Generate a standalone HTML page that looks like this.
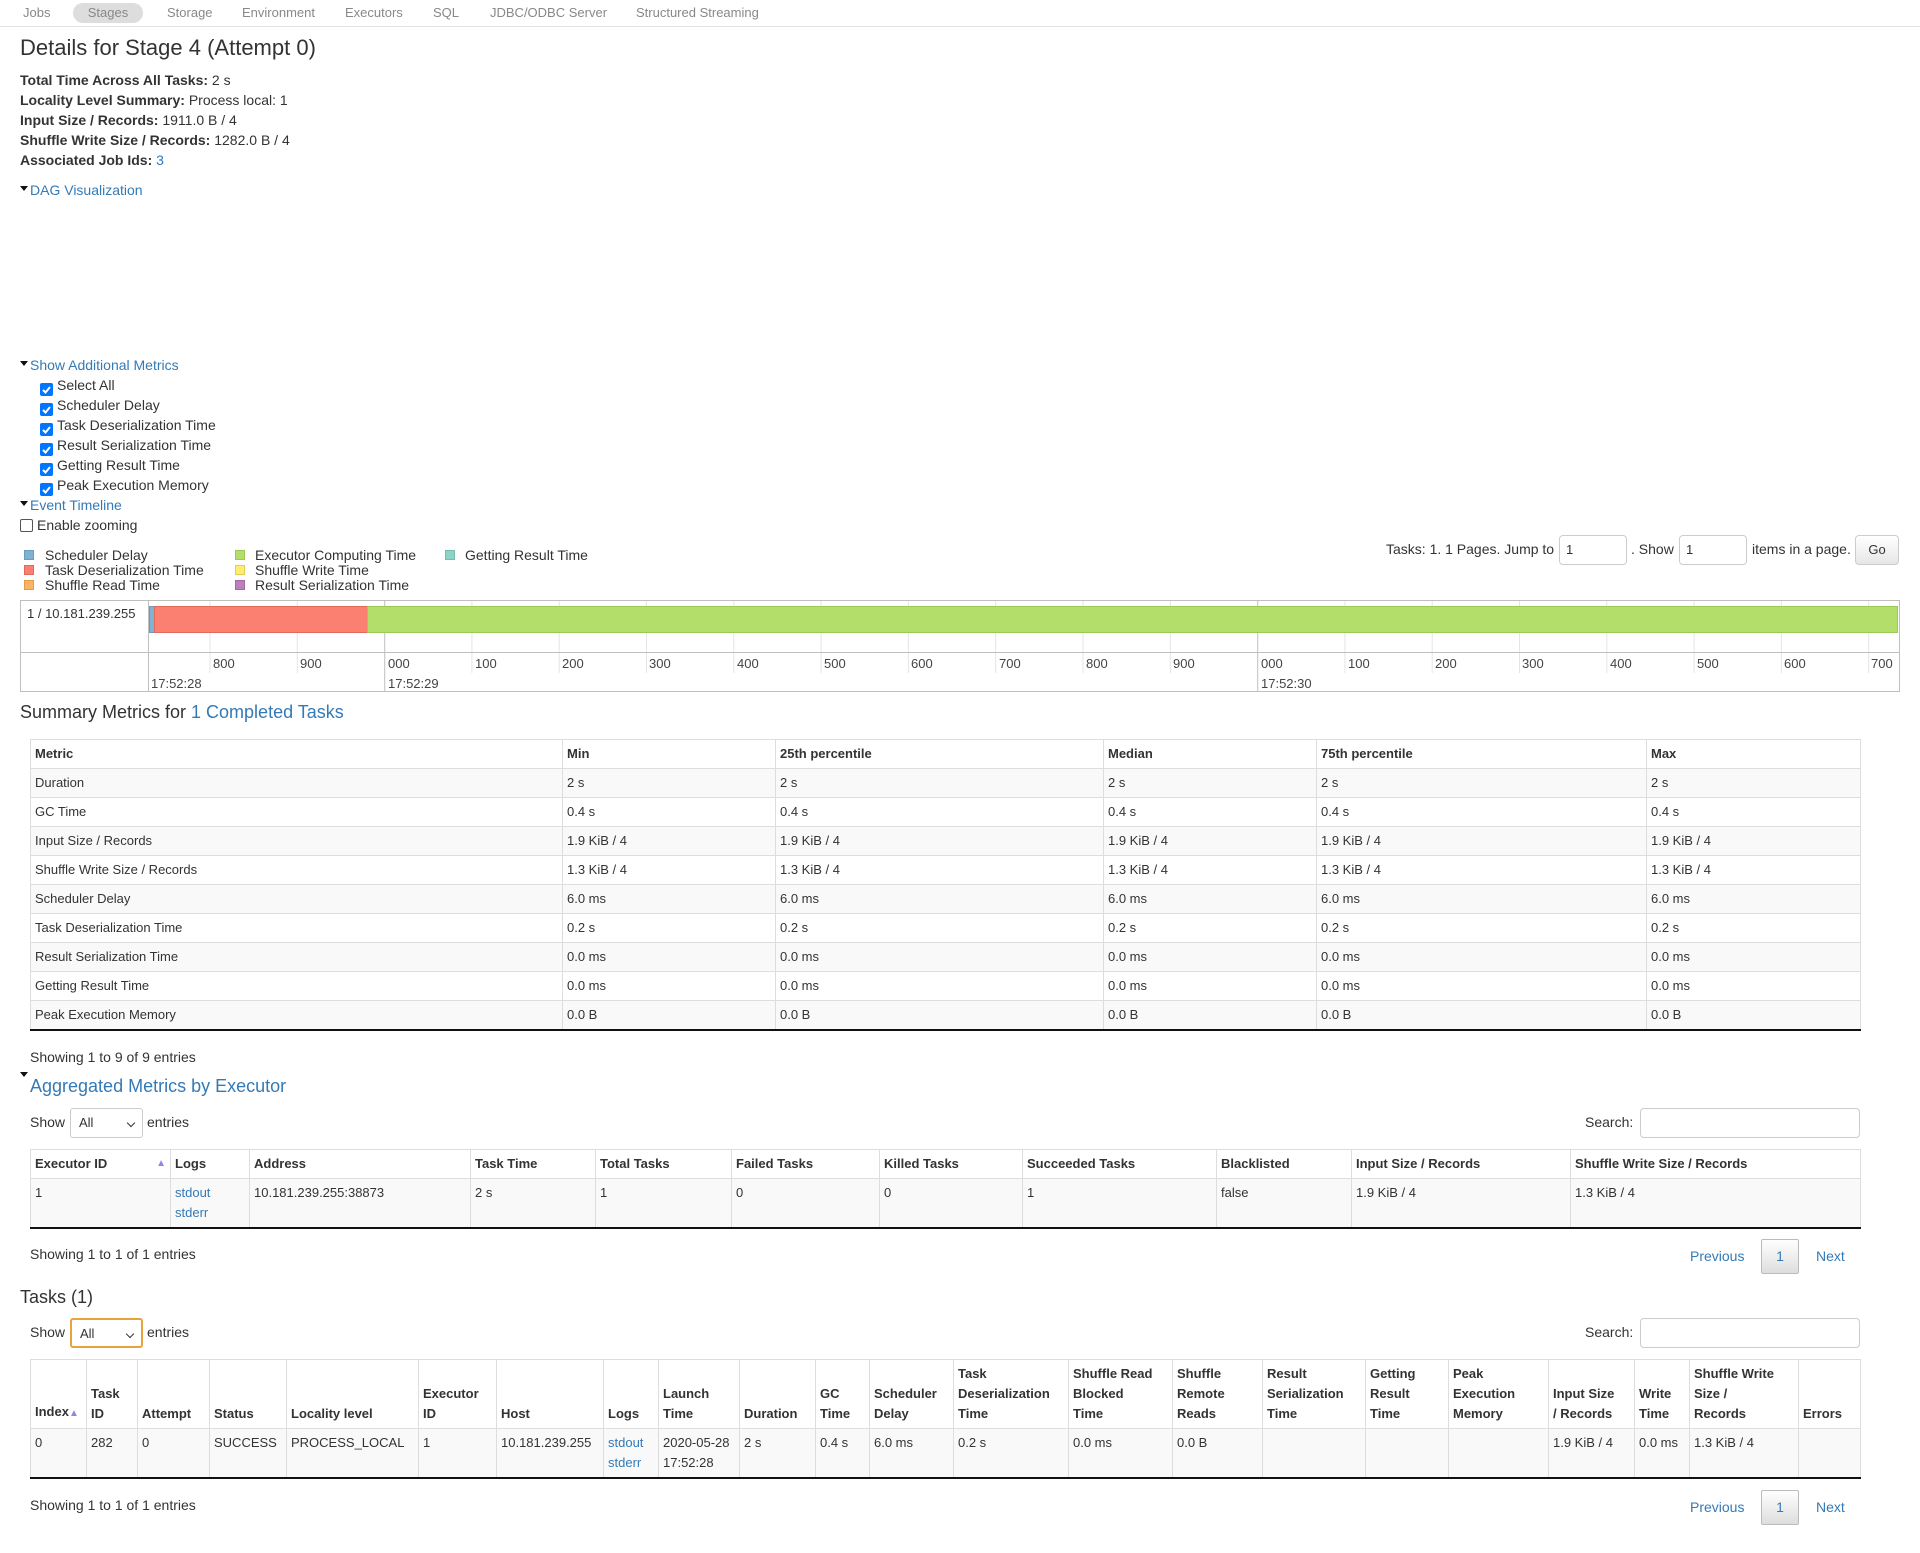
<!DOCTYPE html>
<html><head><meta charset="utf-8"><style>
*{box-sizing:border-box;margin:0;padding:0}
body{width:1920px;height:1553px;background:#fff;font-family:"Liberation Sans",Arial,sans-serif;font-size:14px;color:#333;position:relative;overflow:hidden}
.a{position:absolute;white-space:nowrap;line-height:20px}
a,.l{color:#337ab7;text-decoration:none}
.nav{position:absolute;left:0;top:0;width:1920px;height:27px;border-bottom:1px solid #e3e3e3}
.nav span{position:absolute;top:3px;height:20px;line-height:20px;font-size:13px;color:#888}
.pill{background:#ddd;border-radius:10px;text-align:center}
.cb{position:absolute;width:13px;height:13px;background:#0075ff;border-radius:2px}
.cb svg{position:absolute;left:1px;top:1px}
.tri{position:absolute;width:0;height:0;border-left:4px solid transparent;border-right:4px solid transparent;border-top:5px solid #111}
.sw{position:absolute;width:10px;height:10px}
.inp{position:absolute;border:1px solid #ccc;border-radius:4px;background:#fff;font-size:13px;padding-left:6px;line-height:27px}
table{position:absolute;border-collapse:collapse;table-layout:fixed;font-size:13px;border-top:1px solid #ddd;border-left:1px solid #ddd;border-right:1px solid #ddd;border-bottom:2px solid #111}
td,th{border:1px solid #ddd;padding:4px 4px;line-height:20px;text-align:left;vertical-align:top;overflow:hidden;white-space:nowrap}
th{font-weight:bold;vertical-align:bottom;border-bottom:1px solid #ddd}
tr.o td{background:#f9f9f9}
.pg{position:absolute;height:36px;line-height:34px;font-size:14px}
.pgb{position:absolute;border:1px solid #bbb;border-radius:2px;background:linear-gradient(#fff,#ddd);text-align:center;color:#337ab7;line-height:33px}
.sel{position:absolute;border:1px solid #ccc;border-radius:3px;font-size:13px;padding-left:8px;line-height:27px}
.sel:after{content:"";position:absolute;right:8px;top:11px;width:5px;height:5px;border-right:1.5px solid #333;border-bottom:1.5px solid #333;transform:rotate(45deg)}
</style></head><body>
<div class="nav">
<span style="left:23px">Jobs</span>
<span class="pill" style="left:73px;width:70px">Stages</span>
<span style="left:167px">Storage</span>
<span style="left:242px">Environment</span>
<span style="left:345px">Executors</span>
<span style="left:433px">SQL</span>
<span style="left:490px">JDBC/ODBC Server</span>
<span style="left:636px">Structured Streaming</span>
</div>
<div class="a" style="left:20px;top:33px;font-size:22px;line-height:30px">Details for Stage 4 (Attempt 0)</div>
<div class="a" style="left:20px;top:70px"><b>Total Time Across All Tasks:</b> 2 s</div>
<div class="a" style="left:20px;top:90px"><b>Locality Level Summary:</b> Process local: 1</div>
<div class="a" style="left:20px;top:110px"><b>Input Size / Records:</b> 1911.0 B / 4</div>
<div class="a" style="left:20px;top:130px"><b>Shuffle Write Size / Records:</b> 1282.0 B / 4</div>
<div class="a" style="left:20px;top:150px"><b>Associated Job Ids:</b> <span class="l">3</span></div>
<div class="tri" style="left:20px;top:186px"></div>
<div class="a l" style="left:30px;top:180px">DAG Visualization</div>
<div class="tri" style="left:20px;top:361px"></div>
<div class="a l" style="left:30px;top:355px">Show Additional Metrics</div>
<div class="cb" style="left:40px;top:383px"><svg width="11" height="11"><path d="M2 6 L4.5 8.5 L9 3" stroke="#fff" stroke-width="2" fill="none"/></svg></div>
<div class="a" style="left:57px;top:375px">Select All</div>
<div class="cb" style="left:40px;top:403px"><svg width="11" height="11"><path d="M2 6 L4.5 8.5 L9 3" stroke="#fff" stroke-width="2" fill="none"/></svg></div>
<div class="a" style="left:57px;top:395px">Scheduler Delay</div>
<div class="cb" style="left:40px;top:423px"><svg width="11" height="11"><path d="M2 6 L4.5 8.5 L9 3" stroke="#fff" stroke-width="2" fill="none"/></svg></div>
<div class="a" style="left:57px;top:415px">Task Deserialization Time</div>
<div class="cb" style="left:40px;top:443px"><svg width="11" height="11"><path d="M2 6 L4.5 8.5 L9 3" stroke="#fff" stroke-width="2" fill="none"/></svg></div>
<div class="a" style="left:57px;top:435px">Result Serialization Time</div>
<div class="cb" style="left:40px;top:463px"><svg width="11" height="11"><path d="M2 6 L4.5 8.5 L9 3" stroke="#fff" stroke-width="2" fill="none"/></svg></div>
<div class="a" style="left:57px;top:455px">Getting Result Time</div>
<div class="cb" style="left:40px;top:483px"><svg width="11" height="11"><path d="M2 6 L4.5 8.5 L9 3" stroke="#fff" stroke-width="2" fill="none"/></svg></div>
<div class="a" style="left:57px;top:475px">Peak Execution Memory</div>
<div class="tri" style="left:20px;top:501px"></div>
<div class="a l" style="left:30px;top:495px">Event Timeline</div>
<div style="position:absolute;left:20px;top:519px;width:13px;height:13px;border:1px solid #555;border-radius:2px"></div>
<div class="a" style="left:37px;top:515px">Enable zooming</div>

<div class="sw" style="left:24px;top:550px;background:#80b1d3;border:1px solid #6a9cc0"></div><div class="a" style="left:45px;top:545px">Scheduler Delay</div>
<div class="sw" style="left:24px;top:565px;background:#fb8072;border:1px solid #e06a5c"></div><div class="a" style="left:45px;top:560px">Task Deserialization Time</div>
<div class="sw" style="left:24px;top:580px;background:#fdb462;border:1px solid #e09b4c"></div><div class="a" style="left:45px;top:575px">Shuffle Read Time</div>
<div class="sw" style="left:235px;top:550px;background:#b3de69;border:1px solid #9bc955"></div><div class="a" style="left:255px;top:545px">Executor Computing Time</div>
<div class="sw" style="left:235px;top:565px;background:#ffed6f;border:1px solid #e0cf55"></div><div class="a" style="left:255px;top:560px">Shuffle Write Time</div>
<div class="sw" style="left:235px;top:580px;background:#bc80bd;border:1px solid #a46aa5"></div><div class="a" style="left:255px;top:575px">Result Serialization Time</div>
<div class="sw" style="left:445px;top:550px;background:#8dd3c7;border:1px solid #75bcaf"></div><div class="a" style="left:465px;top:545px">Getting Result Time</div>

<div class="a" style="left:1386px;top:539px">Tasks: 1. 1 Pages. Jump to</div>
<div class="inp" style="left:1559px;top:535px;width:68px;height:30px">1</div>
<div class="a" style="left:1631px;top:539px">. Show</div>
<div class="inp" style="left:1679px;top:535px;width:68px;height:30px">1</div>
<div class="a" style="left:1752px;top:539px">items in a page.</div>
<div class="inp" style="left:1855px;top:535px;width:44px;height:30px;background:linear-gradient(#fff,#e6e6e6);text-align:center;padding:0">Go</div>

<svg style="position:absolute;left:0;top:0" width="1920" height="700">
<rect x="20.5" y="600.5" width="1879" height="91" fill="#fff" stroke="#bfbfbf"/>
<g stroke="#e5e5e5">
<line x1="210" y1="601" x2="210" y2="673"/><line x1="297.3" y1="601" x2="297.3" y2="673"/>
<line x1="471.9" y1="601" x2="471.9" y2="673"/><line x1="559.2" y1="601" x2="559.2" y2="673"/>
<line x1="646.5" y1="601" x2="646.5" y2="673"/><line x1="733.8" y1="601" x2="733.8" y2="673"/>
<line x1="821.1" y1="601" x2="821.1" y2="673"/><line x1="908.4" y1="601" x2="908.4" y2="673"/>
<line x1="995.7" y1="601" x2="995.7" y2="673"/><line x1="1083" y1="601" x2="1083" y2="673"/>
<line x1="1170.3" y1="601" x2="1170.3" y2="673"/>
<line x1="1344.9" y1="601" x2="1344.9" y2="673"/><line x1="1432.2" y1="601" x2="1432.2" y2="673"/>
<line x1="1519.5" y1="601" x2="1519.5" y2="673"/><line x1="1606.8" y1="601" x2="1606.8" y2="673"/>
<line x1="1694.1" y1="601" x2="1694.1" y2="673"/><line x1="1781.4" y1="601" x2="1781.4" y2="673"/>
<line x1="1868.7" y1="601" x2="1868.7" y2="673"/>
</g>
<g stroke="#bfbfbf"><line x1="148.5" y1="601" x2="148.5" y2="691"/><line x1="21" y1="652.5" x2="1899" y2="652.5"/>
<line x1="384.7" y1="601" x2="384.7" y2="691"/><line x1="1257.7" y1="601" x2="1257.7" y2="691"/></g>
<rect x="149.5" y="606.5" width="5" height="26" fill="#80b1d3" stroke="#6a9cc0"/>
<rect x="154.5" y="606.5" width="213" height="26" fill="#fb8072" stroke="#e06a5c"/>
<rect x="367.5" y="606.5" width="1530" height="26" fill="#b3de69" stroke="#9bc955"/>
<g font-family="Liberation Sans,Arial,sans-serif" font-size="13" fill="#444">
<text x="27" y="618" fill="#333">1 / 10.181.239.255</text>
<text x="213" y="668">800</text><text x="300" y="668">900</text><text x="388" y="668">000</text>
<text x="475" y="668">100</text><text x="562" y="668">200</text><text x="649" y="668">300</text>
<text x="737" y="668">400</text><text x="824" y="668">500</text><text x="911" y="668">600</text>
<text x="999" y="668">700</text><text x="1086" y="668">800</text><text x="1173" y="668">900</text>
<text x="1261" y="668">000</text><text x="1348" y="668">100</text><text x="1435" y="668">200</text>
<text x="1522" y="668">300</text><text x="1610" y="668">400</text><text x="1697" y="668">500</text>
<text x="1784" y="668">600</text><text x="1871" y="668">700</text>
<text x="151" y="688">17:52:28</text><text x="388" y="688">17:52:29</text><text x="1261" y="688">17:52:30</text>
</g></svg>

<div class="a" style="left:20px;top:700px;font-size:18px;line-height:24px">Summary Metrics for <span class="l">1 Completed Tasks</span></div>

<table style="left:30px;top:739px;width:1830px">
<colgroup><col style="width:532px"><col style="width:213px"><col style="width:328px"><col style="width:213px"><col style="width:330px"><col style="width:214px"></colgroup>
<tr><th>Metric</th><th>Min</th><th>25th percentile</th><th>Median</th><th>75th percentile</th><th>Max</th></tr>
<tr class="o"><td>Duration</td><td>2 s</td><td>2 s</td><td>2 s</td><td>2 s</td><td>2 s</td></tr>
<tr><td>GC Time</td><td>0.4 s</td><td>0.4 s</td><td>0.4 s</td><td>0.4 s</td><td>0.4 s</td></tr>
<tr class="o"><td>Input Size / Records</td><td>1.9 KiB / 4</td><td>1.9 KiB / 4</td><td>1.9 KiB / 4</td><td>1.9 KiB / 4</td><td>1.9 KiB / 4</td></tr>
<tr><td>Shuffle Write Size / Records</td><td>1.3 KiB / 4</td><td>1.3 KiB / 4</td><td>1.3 KiB / 4</td><td>1.3 KiB / 4</td><td>1.3 KiB / 4</td></tr>
<tr class="o"><td>Scheduler Delay</td><td>6.0 ms</td><td>6.0 ms</td><td>6.0 ms</td><td>6.0 ms</td><td>6.0 ms</td></tr>
<tr><td>Task Deserialization Time</td><td>0.2 s</td><td>0.2 s</td><td>0.2 s</td><td>0.2 s</td><td>0.2 s</td></tr>
<tr class="o"><td>Result Serialization Time</td><td>0.0 ms</td><td>0.0 ms</td><td>0.0 ms</td><td>0.0 ms</td><td>0.0 ms</td></tr>
<tr><td>Getting Result Time</td><td>0.0 ms</td><td>0.0 ms</td><td>0.0 ms</td><td>0.0 ms</td><td>0.0 ms</td></tr>
<tr class="o"><td>Peak Execution Memory</td><td>0.0 B</td><td>0.0 B</td><td>0.0 B</td><td>0.0 B</td><td>0.0 B</td></tr>
</table>
<div class="a" style="left:30px;top:1047px">Showing 1 to 9 of 9 entries</div>
<div class="tri" style="left:20px;top:1072px"></div>
<div class="a l" style="left:30px;top:1074px;font-size:18px;line-height:24px">Aggregated Metrics by Executor</div>
<div class="a" style="left:30px;top:1112px">Show</div>
<div class="sel" style="left:70px;top:1108px;width:73px;height:30px">All</div>
<div class="a" style="left:147px;top:1112px">entries</div>
<div class="a" style="left:1585px;top:1112px">Search:</div>
<div class="inp" style="left:1640px;top:1108px;width:220px;height:30px"></div>

<table style="left:30px;top:1149px;width:1830px">
<colgroup><col style="width:140px"><col style="width:79px"><col style="width:221px"><col style="width:125px"><col style="width:136px"><col style="width:148px"><col style="width:143px"><col style="width:194px"><col style="width:135px"><col style="width:219px"><col style="width:290px"></colgroup>
<tr><th>Executor ID <span style="float:right;color:#8a8ae0;font-size:10px">&#9650;</span></th><th>Logs</th><th>Address</th><th>Task Time</th><th>Total Tasks</th><th>Failed Tasks</th><th>Killed Tasks</th><th>Succeeded Tasks</th><th>Blacklisted</th><th>Input Size / Records</th><th>Shuffle Write Size / Records</th></tr>
<tr class="o"><td>1</td><td><span class="l">stdout</span><br><span class="l">stderr</span></td><td>10.181.239.255:38873</td><td>2 s</td><td>1</td><td>0</td><td>0</td><td>1</td><td>false</td><td>1.9 KiB / 4</td><td>1.3 KiB / 4</td></tr>
</table>
<div class="a" style="left:30px;top:1244px">Showing 1 to 1 of 1 entries</div>
<div class="pg l" style="left:1690px;top:1239px">Previous</div>
<div class="pgb" style="left:1761px;top:1239px;width:38px;height:35px">1</div>
<div class="pg l" style="left:1816px;top:1239px">Next</div>

<div class="a" style="left:20px;top:1285px;font-size:18px;line-height:24px">Tasks (1)</div>
<div class="a" style="left:30px;top:1322px">Show</div>
<div class="sel" style="left:70px;top:1318px;width:73px;height:30px;border:2px solid #e8a33d">All</div>
<div class="a" style="left:147px;top:1322px">entries</div>
<div class="a" style="left:1585px;top:1322px">Search:</div>
<div class="inp" style="left:1640px;top:1318px;width:220px;height:30px"></div>

<table style="left:30px;top:1359px;width:1830px">
<colgroup><col style="width:56px"><col style="width:51px"><col style="width:72px"><col style="width:77px"><col style="width:132px"><col style="width:78px"><col style="width:107px"><col style="width:55px"><col style="width:81px"><col style="width:76px"><col style="width:54px"><col style="width:84px"><col style="width:115px"><col style="width:104px"><col style="width:90px"><col style="width:103px"><col style="width:83px"><col style="width:100px"><col style="width:86px"><col style="width:55px"><col style="width:109px"><col style="width:62px"></colgroup>
<tr style="height:69px"><th>Index<span style="color:#8a8ae0;font-size:10px">&#9650;</span></th><th>Task<br>ID</th><th>Attempt</th><th>Status</th><th>Locality level</th><th>Executor<br>ID</th><th>Host</th><th>Logs</th><th>Launch<br>Time</th><th>Duration</th><th>GC<br>Time</th><th>Scheduler<br>Delay</th><th>Task<br>Deserialization<br>Time</th><th>Shuffle Read<br>Blocked<br>Time</th><th>Shuffle<br>Remote<br>Reads</th><th>Result<br>Serialization<br>Time</th><th>Getting<br>Result<br>Time</th><th>Peak<br>Execution<br>Memory</th><th>Input Size<br>/ Records</th><th>Write<br>Time</th><th>Shuffle Write<br>Size /<br>Records</th><th>Errors</th></tr>
<tr class="o" style="height:49px"><td>0</td><td>282</td><td>0</td><td>SUCCESS</td><td>PROCESS_LOCAL</td><td>1</td><td>10.181.239.255</td><td><span class="l">stdout</span><br><span class="l">stderr</span></td><td>2020-05-28<br>17:52:28</td><td>2 s</td><td>0.4 s</td><td>6.0 ms</td><td>0.2 s</td><td>0.0 ms</td><td>0.0 B</td><td></td><td></td><td></td><td>1.9 KiB / 4</td><td>0.0 ms</td><td>1.3 KiB / 4</td><td></td></tr>
</table>
<div class="a" style="left:30px;top:1495px">Showing 1 to 1 of 1 entries</div>
<div class="pg l" style="left:1690px;top:1490px">Previous</div>
<div class="pgb" style="left:1761px;top:1490px;width:38px;height:35px">1</div>
<div class="pg l" style="left:1816px;top:1490px">Next</div>
</body></html>
